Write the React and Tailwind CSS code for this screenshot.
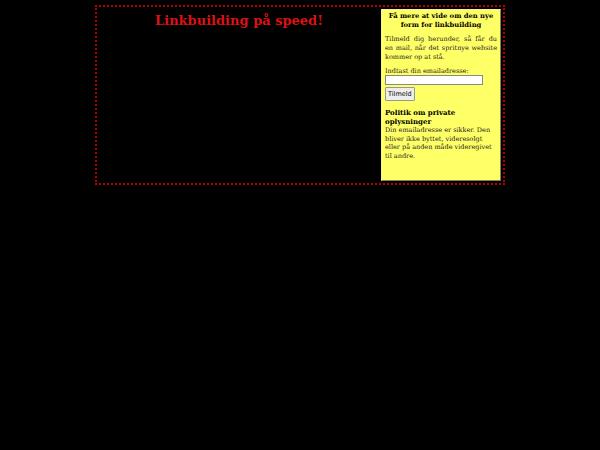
import React from 'react'

const serif = { fontFamily: '"DejaVu Serif", serif' }

export default function App() {
  return (
    <div className="w-[600px] h-[450px] bg-black overflow-hidden" style={serif}>
      <div className="ml-[95px] pt-[5px]">
        <div className="w-[410px] h-[180px] border-2 border-dotted border-[#b00000] flex p-[2px] gap-[2px]">
          {/* Left cell */}
          <div className="flex-1 text-center">
            <h1 className="text-[13px] leading-[18px] font-bold text-[#dd1111] mt-[3px]">
              Linkbuilding på speed!
            </h1>
          </div>

          {/* Signup panel */}
          <div className="w-[120px] bg-[#ffff66] border border-t-[#f0f0a0] border-l-[#f0f0a0] border-r-[#808060] border-b-[#808060] px-[3px] pt-[2px] text-[6.5px] leading-[9px] text-[#222]">
            <p className="font-bold text-center text-black text-[6.8px]">
              Få mere at vide om den nye form for linkbuilding
            </p>
            <p className="mt-[5px] text-justify">
              Tilmeld dig herunder, så får du en mail, når det spritnye website kommer op at stå.
            </p>
            <p className="mt-[5px]">Indtast din emailadresse:</p>
            <input
              type="text"
              className="block w-[98px] h-[10px] -mt-[1px] bg-white border border-[#888]"
            />
            <button
              className="block mt-[2px] h-[14px] px-[2px] bg-[#eeeeee] border border-[#999] rounded-[1px] text-[6.5px] leading-[12px] text-black"
              style={{ fontFamily: '"DejaVu Sans", sans-serif' }}
            >
              Tilmeld
            </button>
            <p className="mt-[7px] font-bold text-black text-[7px]">Politik om private oplysninger</p>
            <p className="leading-[8.7px]">
              Din emailadresse er sikker. Den bliver ikke byttet, videresolgt eller på anden måde videregivet til andre.
            </p>
          </div>
        </div>
      </div>
    </div>
  )
}
